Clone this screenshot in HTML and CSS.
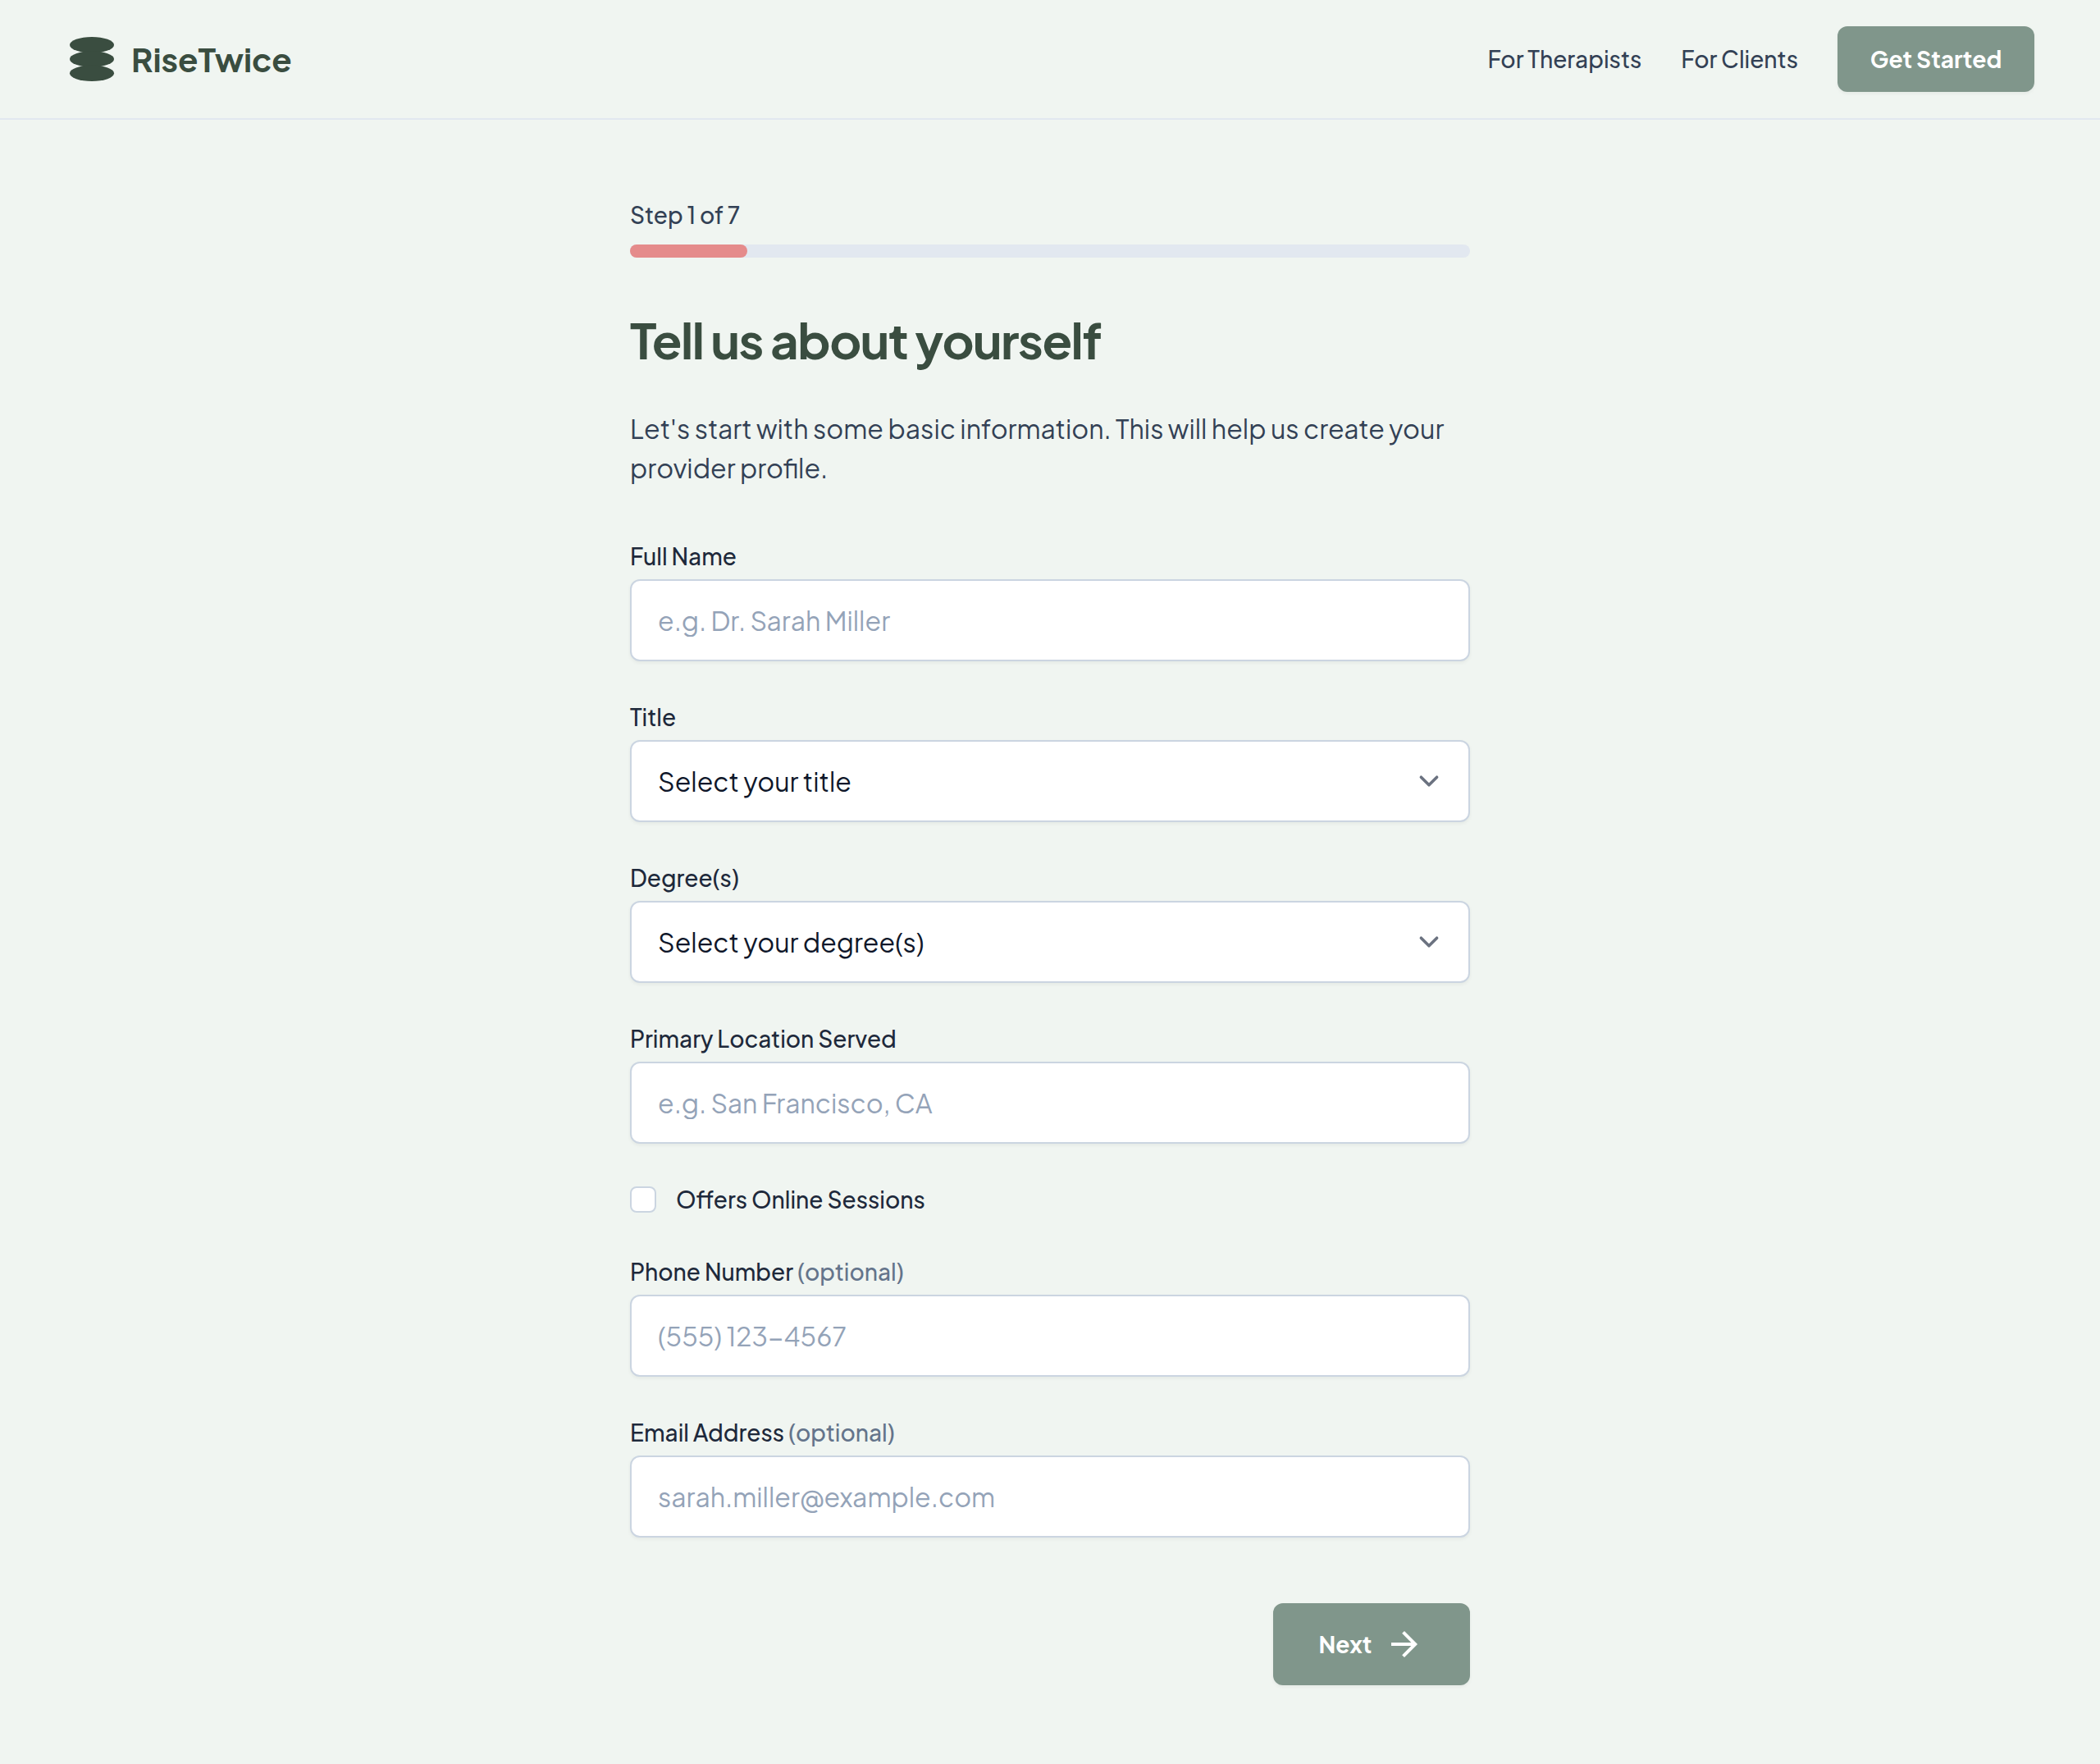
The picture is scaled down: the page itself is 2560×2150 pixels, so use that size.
FILE: index.html
```html
<!DOCTYPE html>
<html lang="en">
<head>
  <meta charset="utf-8">
  <meta name="viewport" content="width=device-width, initial-scale=1">
  <title>RiseTwice</title>
  <link rel="stylesheet" href="styles.css">
</head>
<body>
  <header class="site-header">
    <a class="brand" href="#">
      <svg class="brand-mark" viewBox="0 0 64 64" aria-hidden="true">
        <ellipse cx="32" cy="14.7" rx="27" ry="9.7"/>
        <ellipse cx="32" cy="32" rx="27" ry="9.7"/>
        <ellipse cx="32" cy="49.3" rx="27" ry="9.7"/>
      </svg>
      <span class="brand-name">RiseTwice</span>
    </a>
    <nav class="site-nav">
      <a class="nav-link" href="#">For Therapists</a>
      <a class="nav-link" href="#">For Clients</a>
      <button class="button button-small" type="button">Get Started</button>
    </nav>
  </header>

  <main class="page">
    <section class="progress">
      <p class="progress-label" id="progress-label">Step 1 of 7</p>
      <div class="progress-track" role="progressbar" aria-labelledby="progress-label" aria-valuemin="0" aria-valuemax="7" aria-valuenow="1">
        <div class="progress-fill" style="width: 14%"></div>
      </div>
    </section>

    <h1 class="title">Tell us about yourself</h1>
    <p class="lead">Let's start with some basic information. This will help us create your provider profile.</p>

    <form class="form">
      <div class="field">
        <label class="label" for="name">Full Name</label>
        <input class="control" id="name" type="text" placeholder="e.g. Dr. Sarah Miller">
      </div>
      <div class="field">
        <label class="label" for="title">Title</label>
        <div class="select-box">
          <select class="control" id="title">
            <option>Select your title</option>
          </select>
          <svg class="chevron" viewBox="0 0 20 20" aria-hidden="true"><path d="M6 8l4 4 4-4"/></svg>
        </div>
      </div>
      <div class="field">
        <label class="label" for="degrees">Degree(s)</label>
        <div class="select-box">
          <select class="control" id="degrees">
            <option>Select your degree(s)</option>
          </select>
          <svg class="chevron" viewBox="0 0 20 20" aria-hidden="true"><path d="M6 8l4 4 4-4"/></svg>
        </div>
      </div>
      <div class="field">
        <label class="label" for="location">Primary Location Served</label>
        <input class="control" id="location" type="text" placeholder="e.g. San Francisco, CA">
      </div>
      <div class="check-row">
        <input class="checkbox" id="online" type="checkbox">
        <label class="label" for="online">Offers Online Sessions</label>
      </div>
      <div class="field">
        <label class="label" for="phone">Phone Number <span class="optional">(optional)</span></label>
        <input class="control" id="phone" type="tel" placeholder="(555) 123-4567">
      </div>
      <div class="field">
        <label class="label" for="email">Email Address <span class="optional">(optional)</span></label>
        <input class="control" id="email" type="email" placeholder="sarah.miller@example.com">
      </div>
      <div class="actions">
        <button class="button button-large" type="submit">
          <span>Next</span>
          <svg class="arrow" viewBox="0 0 24 24" aria-hidden="true"><path d="M12 4l-1.41 1.41L16.17 11H4v2h12.17l-5.58 5.59L12 20l8-8z"/></svg>
        </button>
      </div>
    </form>
  </main>
</body>
</html>
```
FILE: styles.css
```css
*,
*::before,
*::after {
  box-sizing: border-box;
}

body {
  margin: 0;
  min-height: 100vh;
  background: #f0f5f1;
  color: #334155;
  font-family: "Plus Jakarta Sans", Inter, "Noto Sans", sans-serif;
  font-size: 28px;
  line-height: 40px;
}

.site-header {
  display: flex;
  align-items: center;
  justify-content: space-between;
  padding: 32px 80px;
  border-bottom: 2px solid #e2e8f0;
}

.brand {
  display: flex;
  align-items: center;
  gap: 16px;
  color: #3a4d40;
  text-decoration: none;
}

.brand-mark {
  width: 64px;
  height: 64px;
  fill: currentColor;
}

.brand-name {
  font-size: 40px;
  font-weight: 700;
}

.site-nav {
  display: flex;
  align-items: center;
  gap: 48px;
}

.nav-link {
  color: #334155;
  font-weight: 500;
  text-decoration: none;
}

.button {
  display: flex;
  align-items: center;
  justify-content: center;
  gap: 16px;
  min-width: 240px;
  border: 0;
  border-radius: 12px;
  background: #80968b;
  box-shadow: 0 2px 4px rgba(0, 0, 0, 0.05);
  color: #fff;
  font: inherit;
  font-weight: 700;
  cursor: pointer;
}

.button-small {
  padding: 20px 32px;
}

.button-large {
  padding: 26px 48px;
}

.arrow {
  width: 48px;
  height: 48px;
  fill: currentColor;
}

.page {
  width: 100%;
  max-width: 1088px;
  margin: 0 auto;
  padding: 96px 32px;
}

.progress {
  display: grid;
  gap: 16px;
}

.progress-label {
  margin: 0;
  font-weight: 500;
}

.progress-track {
  height: 16px;
  border-radius: 8px;
  background: #e2e8f0;
}

.progress-fill {
  height: 100%;
  border-radius: 8px;
  background: #e58b8b;
}

.title {
  margin: 64px 0 48px;
  color: #3a4d40;
  font-size: 60px;
  font-weight: 700;
  letter-spacing: -0.025em;
  line-height: 72px;
}

.lead {
  margin: 0 0 64px;
  font-size: 32px;
  line-height: 48px;
}

.form {
  display: grid;
  gap: 48px;
}

.field {
  display: grid;
  gap: 8px;
}

.label {
  color: #1e293b;
  font-weight: 500;
}

.optional {
  color: #64748b;
}

.control {
  width: 100%;
  height: 100px;
  padding: 24px 32px;
  border: 2px solid #cbd5e1;
  border-radius: 12px;
  background: #fff;
  box-shadow: 0 2px 4px rgba(0, 0, 0, 0.05);
  color: #0f172a;
  font: inherit;
  font-size: 32px;
  line-height: 48px;
  appearance: none;
}

.control::placeholder {
  color: #94a3b8;
  opacity: 1;
}

.select-box {
  display: grid;
  align-items: center;
}

.select-box > * {
  grid-area: 1 / 1;
}

.chevron {
  justify-self: end;
  width: 48px;
  height: 48px;
  margin-right: 26px;
  fill: none;
  stroke: #6b7280;
  stroke-width: 1.5;
  stroke-linecap: round;
  stroke-linejoin: round;
  pointer-events: none;
}

.check-row {
  display: flex;
  align-items: center;
  gap: 24px;
}

.checkbox {
  width: 32px;
  height: 32px;
  margin: 0;
  border: 2px solid #cbd5e1;
  border-radius: 8px;
  background: #fff;
  appearance: none;
}

.checkbox:checked {
  background: #80968b;
}

.actions {
  display: flex;
  justify-content: flex-end;
  padding-top: 32px;
}
```
